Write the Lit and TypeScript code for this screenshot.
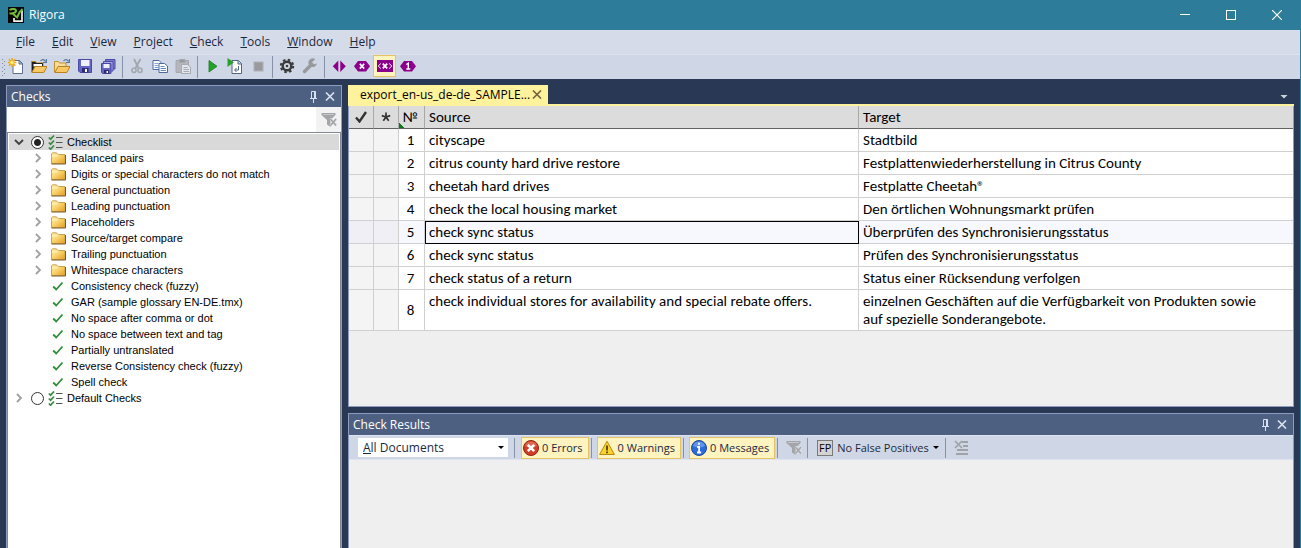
import { LitElement, html, css, TemplateResult } from "lit";
import { customElement, property, state } from "lit/decorators.js";
import { classMap } from "lit/directives/class-map.js";

const icons: Record<string, TemplateResult> = {
  logo: html`<svg width="16" height="16" viewBox="0 0 16 16">
    <rect width="16" height="16" fill="#050505" />
    <path d="M6 11v3.200h8V3.500" fill="none" stroke="#f4f4f4" stroke-width="1.700" />
    <path d="M1.500 3C4 1.500 8.500 1.700 8 4.200 7.600 6.300 4 6.200 1.500 6.600M4.500 6.800c2 .2 2.600 2.600 4.600 3.600C10 7.500 11.500 4.500 14.500 2" fill="none" stroke="#6fbf3a" stroke-width="2" />
  </svg>`,
  newFile: html`<svg width="16" height="16" viewBox="0 0 16 16">
    <path d="M5 2.500h6.500l3 3v10H5z" fill="#fff" stroke="#5b6f8f" />
    <path d="M11 2.500v3.500h3.500z" fill="#b8cbe6" stroke="#5b6f8f" />
    <path d="M4 0v9M-.5 4.500h9M.8 1.300l6.400 6.400M7.200 1.300L.8 7.700" stroke="#f2a51d" stroke-width="1.500" />
    <circle cx="4" cy="4.500" r="2.100" fill="#fff27a" stroke="#f5b41f" stroke-width=".8" />
  </svg>`,
  openProject: html`<svg width="16" height="16" viewBox="0 0 16 16">
    <path d="M.5 14V3.500h4l1 1.500H12v3" fill="#1e1e1e" stroke="#b9821d" />
    <path d="M2 5.500h9.500v3.500H2z" fill="#fff" stroke="#222" />
    <path d="M.8 14.500L4 8.500h12l-3.200 6z" fill="#f7c865" stroke="#b9821d" />
    <path d="M9.500 3c1.500-2 4-2 5 .5M15.500 1v3.500H12" fill="none" stroke="#56789e" stroke-width="1.200" />
  </svg>`,
  open: html`<svg width="16" height="16" viewBox="0 0 16 16">
    <path d="M.5 14V3.500h4l1 1.500H12v3.500" fill="#f7dc98" stroke="#c4922e" />
    <path d="M.8 14.500L4 8.500h12l-3.200 6z" fill="#f7c865" stroke="#b9821d" />
    <path d="M9.500 3c1.500-2 4-2 5 .5M15.500 1v3.500H12" fill="none" stroke="#56789e" stroke-width="1.200" />
  </svg>`,
  save: html`<svg width="16" height="16" viewBox="0 0 16 16">
    <path d="M1.500 1.500h13v13H3l-1.500-1.500z" fill="#6464c4" stroke="#4a4aa6" />
    <rect x="4" y="2" width="8.500" height="6" fill="#eef1fb" />
    <rect x="5" y="10" width="6.500" height="4.500" fill="#2c2c6e" />
    <rect x="8" y="11" width="2" height="3" fill="#fff" />
  </svg>`,
  saveAll: html`<svg width="16" height="16" viewBox="0 0 16 16">
    <path d="M5.500 1.500h9.500v9.500h-9.500z" fill="#7d7dcf" stroke="#4a4aa6" />
    <path d="M3.500 3.500h9.500v9.500h-9.500z" fill="#a7a7e2" stroke="#4a4aa6" />
    <path d="M1.500 5.500h9.500v10H2.500l-1-1z" fill="#6464c4" stroke="#4a4aa6" />
    <rect x="3.500" y="6" width="6" height="4" fill="#eef1fb" />
    <rect x="4" y="12" width="5" height="3.500" fill="#2c2c6e" />
    <rect x="6.500" y="13" width="1.500" height="2" fill="#fff" />
  </svg>`,
  cut: html`<svg width="16" height="16" viewBox="0 0 16 16" fill="none" stroke="#a2a6ae">
    <path d="M5 1l4.500 9M11.500 1L6.500 10" stroke-width="1.800" />
    <circle cx="5" cy="12.300" r="2.100" stroke-width="1.500" />
    <circle cx="11" cy="12.300" r="2.100" stroke-width="1.500" />
  </svg>`,
  copy: html`<svg width="16" height="16" viewBox="0 0 16 16" stroke="#4d6a9a">
    <path d="M1 2.500h6l2.500 2.500v6.500H1z" fill="#fff" />
    <path d="M2.500 5.500h4M2.500 7.500h4M2.500 9.500h4" stroke="#86a3d6" />
    <path d="M7 5.500h5.500L15.500 8v6.500H7z" fill="#fff" />
    <path d="M8.500 8.500h4M8.500 10.500h5.500M8.500 12.500h5.500" stroke="#6689c7" />
  </svg>`,
  paste: html`<svg width="16" height="16" viewBox="0 0 16 16" stroke="#a6a9af">
    <path d="M1 2.500h12.500v12H1z" fill="#b4b6ba" />
    <path d="M4.500 1.500h5.500v3H4.500z" fill="#96999f" />
    <path d="M6.500 6.500h6L15.500 9v6.500h-9z" fill="#e3e6ec" />
    <path d="M8.500 9.500h4M8.500 11.500h5.500M8.500 13.500h5.500" />
  </svg>`,
  play: html`<svg width="16" height="16" viewBox="0 0 16 16">
    <path d="M5 2.500L13 8.300 5 14z" fill="#27a02c" stroke="#157a1c" stroke-width=".8" />
  </svg>`,
  runFile: html`<svg width="16" height="16" viewBox="0 0 16 16">
    <path d="M5 2.500h6.500l3 3v10H5z" fill="#fff" stroke="#4e6683" />
    <path d="M11 2.500v3.500h3.500" fill="#c4d3e8" stroke="#4e6683" />
    <path d="M11.500 8v4H8M9.500 10L7.500 12l2 2" fill="none" stroke="#4e6683" />
    <path d="M.5 0L7 4.300.5 9z" fill="#27a02c" />
  </svg>`,
  stop: html`<svg width="16" height="16" viewBox="0 0 16 16">
    <rect x="4" y="4" width="9" height="9" fill="#9a9a9d" stroke="#aeb1b8" />
  </svg>`,
  gear: html`<svg width="16" height="16" viewBox="0 0 16 16" fill="none" stroke="#3b3b3b">
    <circle cx="8" cy="8" r="4.300" stroke-width="2.400" />
    <circle cx="8" cy="8" r="6.200" stroke-width="2" stroke-dasharray="2.500 2.370" />
    <circle cx="8" cy="8" r="1.300" fill="#3b3b3b" stroke="none" />
  </svg>`,
  wrench: html`<svg width="16" height="16" viewBox="0 0 16 16">
    <path d="M2.500 13.500L9 7" stroke="#98999c" stroke-width="3.400" stroke-linecap="round" />
    <path d="M13.200 1.200a4.300 4.300 0 1 0 1.700 4.300L12 6.300 10 4.300z" fill="#98999c" />
  </svg>`,
  tagPair: html`<svg width="16" height="16" viewBox="0 0 16 16" fill="#8b008b">
    <path d="M7.300 2.500v11.500L1.800 8.200zM9.300 2.500v11.500l5.500-5.800z" />
  </svg>`,
  tagX: html`<svg width="16" height="16" viewBox="0 0 16 16">
    <path d="M4 3h8l4 5.200-4 5.300H4L0 8.200z" fill="#8b008b" />
    <path d="M5.800 5.800l4.400 4.800M10.200 5.800l-4.400 4.800" stroke="#fff" stroke-width="1.700" />
  </svg>`,
  tagXBox: html`<svg width="16" height="16" viewBox="0 0 16 16">
    <rect y="2" width="16" height="12" fill="#8b008b" />
    <path d="M5.800 5.600l4.400 4.800M10.200 5.600l-4.400 4.800" stroke="#fff" stroke-width="1.700" />
    <path d="M3.800 5.500L1.200 8l2.600 2.500M12.200 5.500L14.800 8l-2.600 2.500" fill="none" stroke="#fff" />
  </svg>`,
  tagOne: html`<svg width="16" height="16" viewBox="0 0 16 16">
    <path d="M4 3h8l4 5.200-4 5.300H4L0 8.200z" fill="#8b008b" />
    <path d="M6.300 6.500L8.300 5.200V11M6.300 11h4" fill="none" stroke="#fff" stroke-width="1.400" />
  </svg>`,
  pin: html`<svg width="9" height="12" viewBox="0 0 9 12" fill="none" stroke="#dbe2ef">
    <path d="M2.500 7V.5h4V7M5.500 .5V7M1 7.500h7M4.500 8v4" />
  </svg>`,
  close: html`<svg width="10" height="9" viewBox="0 0 10 9" fill="none" stroke="currentColor" stroke-width="1.600">
    <path d="M1 .5l8 8M9 .5l-8 8" />
  </svg>`,
  filterOff: html`<svg width="16" height="16" viewBox="0 0 16 16">
    <path d="M.5 1h14v2L9.500 8v7L6 12.500V8L.5 3z" fill="#a3a5a8" />
    <path d="M2 2.500h11" stroke="#c6c8cb" />
    <path d="M9.500 6.500l6 7M15.500 6.500l-6 7" stroke="#e4e6ea" stroke-width="2.600" />
    <path d="M9.500 7l5.500 6.500M15 7l-5.500 6.500" stroke="#a3a5a8" stroke-width="1.600" />
  </svg>`,
  checklist: html`<svg width="15" height="15" viewBox="0 0 15 15" fill="none">
    <path d="M8 2.500h6.500M8 7.500h6.500M8 12.500h6.500" stroke="#555" />
    <path d="M.8 2.500L2.600 4.200 6 .5M.8 7.500l1.800 1.700L6 5.500M.8 12.500l1.800 1.700L6 10.500" stroke="#3c8c41" stroke-width="1.700" />
  </svg>`,
  folder: html`<svg width="15" height="13" viewBox="0 0 15 13">
    <defs>
      <linearGradient id="fold" x1="0" y1="0" x2="1" y2="1">
        <stop offset="0" stop-color="#fdf3ae" /><stop offset=".5" stop-color="#f8d068" /><stop offset="1" stop-color="#e59b1d" />
      </linearGradient>
    </defs>
    <path d="M.5 11.500V2L1.500.8h4L7 2.500h7v9z" fill="url(#fold)" stroke="#c9a452" />
    <path d="M1 4h5l1-1.500" fill="none" stroke="#fff5c4" />
    <path d="M.5 12h14V3" fill="none" stroke="#7a5a24" />
  </svg>`,
  tick: html`<svg width="12" height="10" viewBox="0 0 12 10" fill="none">
    <path d="M1.200 5.500l3 3L10.500 1.500" stroke="#2f8f36" stroke-width="1.800" />
  </svg>`,
  bigTick: html`<svg width="12" height="12" viewBox="0 0 12 12" fill="none">
    <path d="M1 6.500l3.500 4L11 1" stroke="#333" stroke-width="2.400" />
  </svg>`,
  star: html`<svg width="10" height="10" viewBox="0 0 10 10" stroke="#333" stroke-width="1.700">
    <path d="M5 5V.5M5 5L.8 3.600M5 5l4.200-1.400M5 5L2.300 8.800M5 5l2.700 3.800" />
  </svg>`,
  error: html`<svg width="16" height="16" viewBox="0 0 16 16">
    <circle cx="8" cy="8" r="7.500" fill="#d23c28" stroke="#8f2417" />
    <path d="M2 6a6.300 6.300 0 0 1 12 0c-4 2-8 2-12 0z" fill="#ea8372" opacity=".6" />
    <path d="M4.800 4.800l6.400 6.400M11.200 4.800l-6.400 6.400" stroke="#fff" stroke-width="2.600" />
  </svg>`,
  warning: html`<svg width="16" height="16" viewBox="0 0 16 16">
    <path d="M8 1.200L15.400 14.500H.6z" fill="#fcd22c" stroke="#b98710" stroke-linejoin="round" />
    <path d="M8 5.500v5M8 11.500v1.700" stroke="#4a3a08" stroke-width="1.700" />
  </svg>`,
  info: html`<svg width="16" height="16" viewBox="0 0 16 16">
    <circle cx="8" cy="8" r="7.500" fill="#2d6bdc" stroke="#1b489f" />
    <path d="M2 6a6.300 6.300 0 0 1 12 0c-4 2-8 2-12 0z" fill="#86aef2" opacity=".6" />
    <path d="M8 2.800v2M6.200 7h1.900v5.500M6 12.500h4.200" fill="none" stroke="#fff" stroke-width="1.800" />
  </svg>`,
  clearList: html`<svg width="16" height="16" viewBox="0 0 16 16" fill="none" stroke="#a0a2a6">
    <path d="M8 2h6M9 6h5M3 10h11M2 14h12" stroke-width="2" />
    <path d="M1 1l7 7M8 1L1 8" stroke-width="1.700" />
  </svg>`,
};

type Tool = { id: string; label: string; on?: boolean } | "sep";

const tools: Tool[] = [
  { id: "newFile", label: "New project" },
  { id: "openProject", label: "Open project" },
  { id: "open", label: "Open file" },
  { id: "save", label: "Save" },
  { id: "saveAll", label: "Save all" },
  "sep",
  { id: "cut", label: "Cut" },
  { id: "copy", label: "Copy" },
  { id: "paste", label: "Paste" },
  "sep",
  { id: "play", label: "Run checks" },
  { id: "runFile", label: "Run on document" },
  { id: "stop", label: "Stop" },
  "sep",
  { id: "gear", label: "Settings" },
  { id: "wrench", label: "Fix" },
  "sep",
  { id: "tagPair", label: "Hide tags" },
  { id: "tagX", label: "Short tags" },
  { id: "tagXBox", label: "Full tags", on: true },
  { id: "tagOne", label: "Numbered tags" },
];

const base = css`
  *,
  *::before,
  *::after {
    box-sizing: border-box;
  }
  svg {
    display: block;
    flex: none;
  }
  button,
  input,
  select {
    font: inherit;
    color: inherit;
    margin: 0;
    padding: 0;
    border: 0;
    background: none;
    border-radius: 0;
  }
`;

@customElement("panel-header")
class PanelHeader extends LitElement {
  @property() caption = "";

  static styles = [
    base,
    css`
      :host {
        display: flex;
        align-items: center;
        flex: none;
        height: 21px;
        padding: 0 6px 0 4px;
        gap: 7px;
        background: #4d6082;
        color: #fff;
      }
      .caption {
        flex: 1;
        margin: 0;
        font-size: 12px;
        font-weight: 400;
      }
      .action {
        color: #dbe2ef;
      }
    `,
  ];

  render() {
    return html`
      <h2 class="caption">${this.caption}</h2>
      <button class="action" aria-label="Auto hide">${icons.pin}</button>
      <button class="action" aria-label="Close">${icons.close}</button>
    `;
  }
}

@customElement("check-tree")
class CheckTree extends LitElement {
  @state() private active = "Checklist";

  private groups = [
    "Balanced pairs",
    "Digits or special characters do not match",
    "General punctuation",
    "Leading punctuation",
    "Placeholders",
    "Source/target compare",
    "Trailing punctuation",
    "Whitespace characters",
  ];

  private checks = [
    "Consistency check (fuzzy)",
    "GAR (sample glossary EN-DE.tmx)",
    "No space after comma or dot",
    "No space between text and tag",
    "Partially untranslated",
    "Reverse Consistency check (fuzzy)",
    "Spell check",
  ];

  static styles = [
    base,
    css`
      :host {
        display: block;
        flex: 1;
        min-height: 0;
        overflow: hidden;
        padding: 1px;
        border: 1px solid #828790;
        border-bottom: 0;
        background: #fff;
        font-family: "Liberation Sans", Arial, sans-serif;
        font-size: 11px;
        line-height: 16px;
        color: #000;
      }
      ul {
        list-style: none;
        margin: 0;
        padding: 0;
      }
      .row {
        display: flex;
        align-items: center;
        height: 16px;
        white-space: nowrap;
      }
      .selected {
        background: #d9d9d9;
      }
      .toggle {
        display: grid;
        place-items: center;
        width: 20px;
        height: 16px;
        color: #a0a0a0;
      }
      .open {
        color: #404040;
      }
      .nested .row {
        padding-left: 19px;
      }
      .slot {
        display: grid;
        place-items: center;
        width: 20px;
        margin-right: 3px;
      }
      .spacer {
        width: 20px;
      }
      .pick {
        display: flex;
        align-items: center;
        gap: 4px;
      }
      .radio {
        appearance: none;
        width: 13px;
        height: 13px;
        margin: 0 0 0 2px;
        border: 1px solid #333;
        border-radius: 50%;
        background: #fff;
      }
      .radio:checked {
        background: radial-gradient(circle, #222 0 3px, #fff 4px);
      }
    `,
  ];

  private chevron(open: boolean) {
    return html`<button class=${classMap({ toggle: true, open })} aria-label=${open ? "Collapse" : "Expand"}>
      <svg width="10" height="10" viewBox="0 0 10 10" fill="none" stroke="currentColor" stroke-width="1.800">
        <path d=${open ? "M1 3l4 4 4-4" : "M3 1l4 4-4 4"} />
      </svg>
    </button>`;
  }

  private root(name: string, open: boolean) {
    return html`<div class=${classMap({ row: true, selected: open })}>
      ${this.chevron(open)}
      <label class="pick">
        <input
          class="radio"
          type="radio"
          name="profile"
          .checked=${this.active === name}
          @change=${() => (this.active = name)}
        />
        ${icons.checklist} ${name}
      </label>
    </div>`;
  }

  render() {
    return html`<ul>
      <li>
        ${this.root("Checklist", true)}
        <ul class="nested">
          ${this.groups.map(
            (g) => html`<li class="row">${this.chevron(false)}<span class="slot">${icons.folder}</span>${g}</li>`
          )}
          ${this.checks.map(
            (c) => html`<li class="row"><span class="spacer"></span><span class="slot">${icons.tick}</span>${c}</li>`
          )}
        </ul>
      </li>
      <li>${this.root("Default Checks", false)}</li>
    </ul>`;
  }
}

@customElement("segment-grid")
class SegmentGrid extends LitElement {
  @property({ type: Number }) current = 5;

  private rows = [
    ["cityscape", "Stadtbild"],
    ["citrus county hard drive restore", "Festplattenwiederherstellung in Citrus County"],
    ["cheetah hard drives", "Festplatte Cheetah®"],
    ["check the local housing market", "Den örtlichen Wohnungsmarkt prüfen"],
    ["check sync status", "Überprüfen des Synchronisierungsstatus"],
    ["check sync status", "Prüfen des Synchronisierungsstatus"],
    ["check status of a return", "Status einer Rücksendung verfolgen"],
    [
      "check individual stores for availability and special rebate offers.",
      "einzelnen Geschäften auf die Verfügbarkeit von Produkten sowie auf spezielle Sonderangebote.",
    ],
  ];

  static styles = [
    base,
    css`
      :host {
        display: block;
        flex: 1;
        min-height: 0;
        overflow: hidden;
        border: 1px solid #8e9bbc;
        border-top: 0;
        background: #efefef;
        font-family: Carlito, Calibri, Lato, sans-serif;
        font-size: 15px;
        line-height: 18px;
        color: #000;
      }
      table {
        width: 100%;
        table-layout: fixed;
        border-collapse: separate;
        border-spacing: 0;
      }
      .mark {
        width: 25px;
      }
      .number {
        width: 26px;
      }
      th,
      td {
        padding: 2px 20px 2px 4px;
        border: 0 solid #d0d0d0;
        border-width: 0 1px 1px 0;
        text-align: left;
        vertical-align: top;
        font-weight: 400;
        background: #fff;
      }
      th {
        background: #dcdcdc;
        border-color: #a8a8a8;
        border-bottom-color: #646464;
      }
      th:last-child,
      td:last-child {
        border-right: 0;
      }
      .flag {
        padding: 0;
        background: #f4f4f4;
      }
      th.flag {
        background: #dcdcdc;
        vertical-align: middle;
      }
      .flag svg {
        margin: 0 auto;
      }
      .num {
        padding: 2px 2px 2px 0;
        text-align: center;
        vertical-align: middle;
      }
      th.num {
        background: linear-gradient(45deg, #0a7a1c 4px, transparent 4px) #dcdcdc;
      }
      .current td {
        background: #f7f8fd;
      }
      .current .flag {
        background: #f0eff5;
      }
      .current .focus {
        outline: 1px solid #000;
        outline-offset: -1px;
      }
    `,
  ];

  render() {
    return html`<table>
      <colgroup>
        <col class="mark" />
        <col class="mark" />
        <col class="number" />
        <col />
        <col />
      </colgroup>
      <thead>
        <tr>
          <th class="flag" aria-label="Checked">${icons.bigTick}</th>
          <th class="flag" aria-label="Changed">${icons.star}</th>
          <th class="num">№</th>
          <th>Source</th>
          <th>Target</th>
        </tr>
      </thead>
      <tbody>
        ${this.rows.map(
          ([source, target], i) => html`<tr class=${i + 1 === this.current ? "current" : ""}>
            <td class="flag"></td>
            <td class="flag"></td>
            <td class="num">${i + 1}</td>
            <td class="focus">${source}</td>
            <td>${target}</td>
          </tr>`
        )}
      </tbody>
    </table>`;
  }
}

@customElement("results-bar")
class ResultsBar extends LitElement {
  static styles = [
    base,
    css`
      :host {
        display: flex;
        align-items: center;
        flex: none;
        height: 25px;
        padding-left: 9px;
        border-top: 1px solid #dde3f0;
        border-bottom: 1px solid #dde3f0;
        background: #cfd6e5;
        color: #1b293e;
        font-size: 11px;
        white-space: nowrap;
      }
      .picker {
        position: relative;
        width: 150px;
        height: 19px;
        background: #fff;
        font-size: 12px;
      }
      .picker select {
        appearance: none;
        width: 100%;
        height: 19px;
        padding-left: 5px;
        line-height: 19px;
      }
      .accel {
        position: absolute;
        left: 5px;
        bottom: 3px;
        width: 8px;
        height: 1px;
        background: #1b293e;
      }
      .caret {
        width: 0;
        border: 3px solid transparent;
        border-top-color: #000;
        border-bottom: 0;
      }
      .picker .caret {
        position: absolute;
        right: 4px;
        top: 8px;
        pointer-events: none;
      }
      .sep {
        width: 1px;
        height: 20px;
        margin: 0 5px 0 2px;
        background: #8591a6;
      }
      .wide {
        margin: 0 6px;
      }
      .level {
        display: flex;
        align-items: center;
        height: 22px;
        gap: 3px;
        padding: 0 5px 0 1px;
        border: 1px solid #e5c365;
        background: #fff3bf;
      }
      .tool {
        padding: 0 3px;
      }
      .plain {
        display: flex;
        align-items: center;
        gap: 4px;
        padding: 0 4px;
      }
      .badge {
        width: 16px;
        height: 16px;
        border: 1px solid #7a7a7a;
        background: #d4d4d4;
        color: #000;
        line-height: 14px;
        text-align: center;
      }
    `,
  ];

  render() {
    return html`
      <div class="picker">
        <select aria-label="Documents">
          <option>All Documents</option>
        </select>
        <span class="accel"></span><span class="caret"></span>
      </div>
      <span class="sep wide"></span>
      <button class="level" aria-pressed="true">${icons.error}0 Errors</button>
      <span class="sep"></span>
      <button class="level" aria-pressed="true">${icons.warning}0 Warnings</button>
      <span class="sep"></span>
      <button class="level" aria-pressed="true">${icons.info}0 Messages</button>
      <span class="sep"></span>
      <button class="tool" aria-label="Clear filter">${icons.filterOff}</button>
      <span class="sep"></span>
      <button class="plain"><span class="badge">FP</span>No False Positives<span class="caret"></span></button>
      <span class="sep"></span>
      <button class="tool" aria-label="Clear results">${icons.clearList}</button>
    `;
  }
}

@customElement("app-root")
class AppRoot extends LitElement {
  private menu = ["File", "Edit", "View", "Project", "Check", "Tools", "Window", "Help"];

  static styles = [
    base,
    css`
      :host {
        display: flex;
        flex-direction: column;
        height: 100vh;
        overflow: hidden;
        border-right: 1px solid #2d7d9a;
        box-sizing: border-box;
        background: #293955;
        font-family: "Open Sans", "Segoe UI", sans-serif;
        font-size: 12px;
        line-height: 16px;
        color: #1b293e;
      }
      .title {
        display: flex;
        align-items: center;
        flex: none;
        height: 30px;
        padding-left: 8px;
        gap: 5px;
        background: #2d7d9a;
        color: #fff;
      }
      .name {
        flex: 1;
        margin: 0;
        font-size: 12px;
        font-weight: 400;
      }
      .controls {
        display: flex;
      }
      .control {
        display: grid;
        place-items: center;
        width: 46px;
        height: 30px;
      }
      .menu {
        display: flex;
        align-items: center;
        flex: none;
        height: 24px;
        padding-left: 16px;
        gap: 17px;
        background: #d6dbe9;
      }
      .menu a {
        color: inherit;
        text-decoration: none;
      }
      .tools {
        display: flex;
        align-items: flex-start;
        flex: none;
        height: 25px;
        border-top: 1px solid #dde1ea;
        background: #cfd6e5;
      }
      .grip {
        width: 4px;
        margin-top: 3px;
        overflow: visible;
      }
      .tool {
        display: grid;
        place-items: center;
        width: 23px;
        height: 22px;
      }
      .on {
        border: 1px solid #e5c365;
        background: #fff3bf;
      }
      .sep {
        width: 1px;
        height: 22px;
        margin: 1px 2px 0 3px;
        background: #8591a6;
      }
      .main {
        display: grid;
        grid-template-columns: 336px 1fr;
        gap: 6px;
        flex: 1;
        min-height: 0;
        padding: 6px 6px 0;
      }
      .pane {
        display: flex;
        flex-direction: column;
        min-height: 0;
        border: 1px solid #8e9bbc;
        border-bottom: 0;
        background: #efefef;
      }
      .search {
        display: flex;
        flex: none;
        height: 25px;
        background: #fff;
      }
      .query {
        flex: 1;
        min-width: 0;
        padding: 0 4px;
        outline: none;
      }
      .clear {
        display: grid;
        place-items: center;
        width: 25px;
        background: #f2f2f2;
      }
      .work {
        display: flex;
        flex-direction: column;
        gap: 6px;
        min-width: 0;
        min-height: 0;
      }
      .document {
        display: flex;
        flex-direction: column;
        flex: 1;
        min-height: 0;
      }
      .tabs {
        display: flex;
        justify-content: space-between;
        flex: none;
        height: 21px;
        border-bottom: 2px solid #fff29d;
      }
      .tab {
        display: flex;
        align-items: center;
        justify-content: space-between;
        width: 200px;
        padding: 0 6px 0 12px;
        background: #fff29d;
        color: #000;
      }
      .shut {
        color: #75633d;
      }
      .more {
        align-self: center;
        width: 8px;
        height: 4px;
        margin: 4px 6px 0 0;
        background: #ced4dd;
        clip-path: polygon(0 0, 100% 0, 50% 100%);
      }
      .results {
        flex: 0 0 135px;
      }
    `,
  ];

  render() {
    return html`
      <header class="title">
        ${icons.logo}
        <h1 class="name">Rigora</h1>
        <div class="controls">
          <button class="control" aria-label="Minimize">
            <svg width="10" height="10"><path d="M0 4.500h10" stroke="#fff" /></svg>
          </button>
          <button class="control" aria-label="Maximize">
            <svg width="10" height="10"><rect x=".5" y=".5" width="9" height="9" fill="none" stroke="#fff" /></svg>
          </button>
          <button class="control" aria-label="Close">
            <svg width="10" height="10"><path d="M0 0l10 10M10 0L0 10" stroke="#fff" stroke-width="1.200" /></svg>
          </button>
        </div>
      </header>
      <nav class="menu">
        ${this.menu.map((m) => html`<a href="#"><u>${m[0]}</u>${m.slice(1)}</a>`)}
      </nav>
      <div class="tools" role="toolbar">
        <svg class="grip" width="4" height="18" viewBox="0 0 4 18" fill="#7f8ba3">
          <path d="M2 1h1v1H2zM2 5h1v1H2zM2 9h1v1H2zM2 13h1v1H2zM2 17h1v1H2zM4 3h1v1H4zM4 7h1v1H4zM4 11h1v1H4zM4 15h1v1H4z" />
        </svg>
        ${tools.map((t) =>
          t === "sep"
            ? html`<span class="sep"></span>`
            : html`<button class=${classMap({ tool: true, on: !!t.on })} aria-label=${t.label}>${icons[t.id]}</button>`
        )}
      </div>
      <main class="main">
        <section class="pane">
          <panel-header caption="Checks"></panel-header>
          <div class="search">
            <input class="query" type="text" aria-label="Filter checks" />
            <button class="clear" aria-label="Clear filter">${icons.filterOff}</button>
          </div>
          <check-tree></check-tree>
        </section>
        <div class="work">
          <section class="document">
            <div class="tabs">
              <div class="tab">
                <span>export_en-us_de-de_SAMPLE...</span>
                <button class="shut" aria-label="Close document">${icons.close}</button>
              </div>
              <button class="more" aria-label="Open documents"></button>
            </div>
            <segment-grid></segment-grid>
          </section>
          <section class="pane results">
            <panel-header caption="Check Results"></panel-header>
            <results-bar></results-bar>
          </section>
        </div>
      </main>
    `;
  }
}
